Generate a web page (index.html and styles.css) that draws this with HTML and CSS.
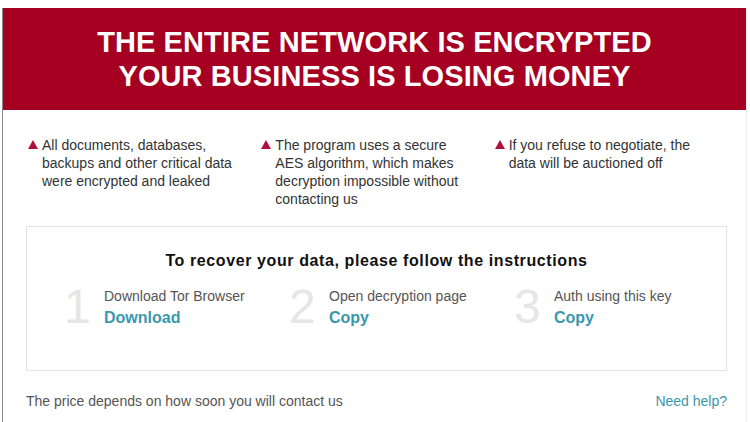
FILE: index.html
```html
<!DOCTYPE html>
<html lang="en">
<head>
    <meta charset="UTF-8">
    <meta name="viewport" content="width=device-width, initial-scale=1.0">
    <title>Notice</title>
    <link rel="stylesheet" href="styles.css">
</head>
<body>
    <div class="window">
        <div class="header">
            <h1>THE ENTIRE NETWORK IS ENCRYPTED<br>YOUR BUSINESS IS LOSING MONEY</h1>
        </div>

        <div class="content">
            <div class="facts">
                <div class="fact">All documents, databases, backups and other critical data were encrypted and leaked</div>
                <div class="fact">The program uses a secure AES algorithm, which makes decryption impossible without contacting us</div>
                <div class="fact">If you refuse to negotiate, the data will be auctioned off</div>
            </div>

            <div class="box">
                <h2>To recover your data, please follow the instructions</h2>
                <div class="steps">
                    <div class="step">
                        <span class="num">1</span>
                        <div class="step-text">
                            <div class="label">Download Tor Browser</div>
                            <a class="action">Download</a>
                        </div>
                    </div>
                    <div class="step">
                        <span class="num">2</span>
                        <div class="step-text">
                            <div class="label">Open decryption page</div>
                            <a class="action">Copy</a>
                        </div>
                    </div>
                    <div class="step">
                        <span class="num">3</span>
                        <div class="step-text">
                            <div class="label">Auth using this key</div>
                            <a class="action">Copy</a>
                        </div>
                    </div>
                </div>
            </div>

            <div class="footer">
                <span>The price depends on how soon you will contact us</span>
                <a class="help">Need help?</a>
            </div>
        </div>
    </div>
</body>
</html>
```

FILE: styles.css
```css
body {
    margin: 0;
    padding: 8px 0 0 2px;
    font-family: "Liberation Sans", Arial, sans-serif;
    background: #fff;
}
.window {
    width: 745px;
    height: 414px;
    border-left: 1px solid #8a8a8a;
    border-right: 1px solid #ececec;
    box-sizing: border-box;
}
.header {
    background-color: #a50021;
    height: 102px;
    display: flex;
    align-items: center;
    justify-content: center;
}
.header h1 {
    margin: 0;
    color: #fff;
    font-size: 29px;
    line-height: 34px;
    text-align: center;
    font-weight: bold;
    letter-spacing: 0.1px;
}
.content {
    padding: 26px 20px 0 23px;
}
.facts {
    display: flex;
}
.fact {
    width: 239px;
    position: relative;
    padding-left: 16px;
    padding-right: 23px;
    box-sizing: border-box;
    font-size: 14px;
    line-height: 18px;
    color: #333;
}
.fact::before {
    content: "";
    position: absolute;
    left: 2px;
    top: 4px;
    border-left: 5px solid transparent;
    border-right: 5px solid transparent;
    border-bottom: 9px solid #b0103a;
}
.box {
    margin-top: 18px;
    width: 701px;
    height: 145px;
    border: 1px solid #e3e3e3;
    box-sizing: border-box;
    padding-top: 25px;
}
.box h2 {
    margin: 0;
    text-align: center;
    font-size: 16px;
    color: #111;
    letter-spacing: 0.6px;
}
.steps {
    display: flex;
    padding-left: 37px;
    margin-top: 17px;
}
.step {
    flex: none;
    width: 225px;
    display: flex;
}
.num {
    width: 40px;
    font-size: 48px;
    line-height: 40px;
    color: #e6e6e6;
}
.label {
    font-size: 14px;
    color: #555;
    line-height: 18px;
}
.action {
    display: block;
    margin-top: 4px;
    font-size: 16px;
    font-weight: bold;
    color: #3a98ad;
}
.footer {
    display: flex;
    justify-content: space-between;
    width: 701px;
    margin-top: 22px;
    font-size: 14px;
    color: #555;
}
.help {
    color: #3a98ad;
}
```
